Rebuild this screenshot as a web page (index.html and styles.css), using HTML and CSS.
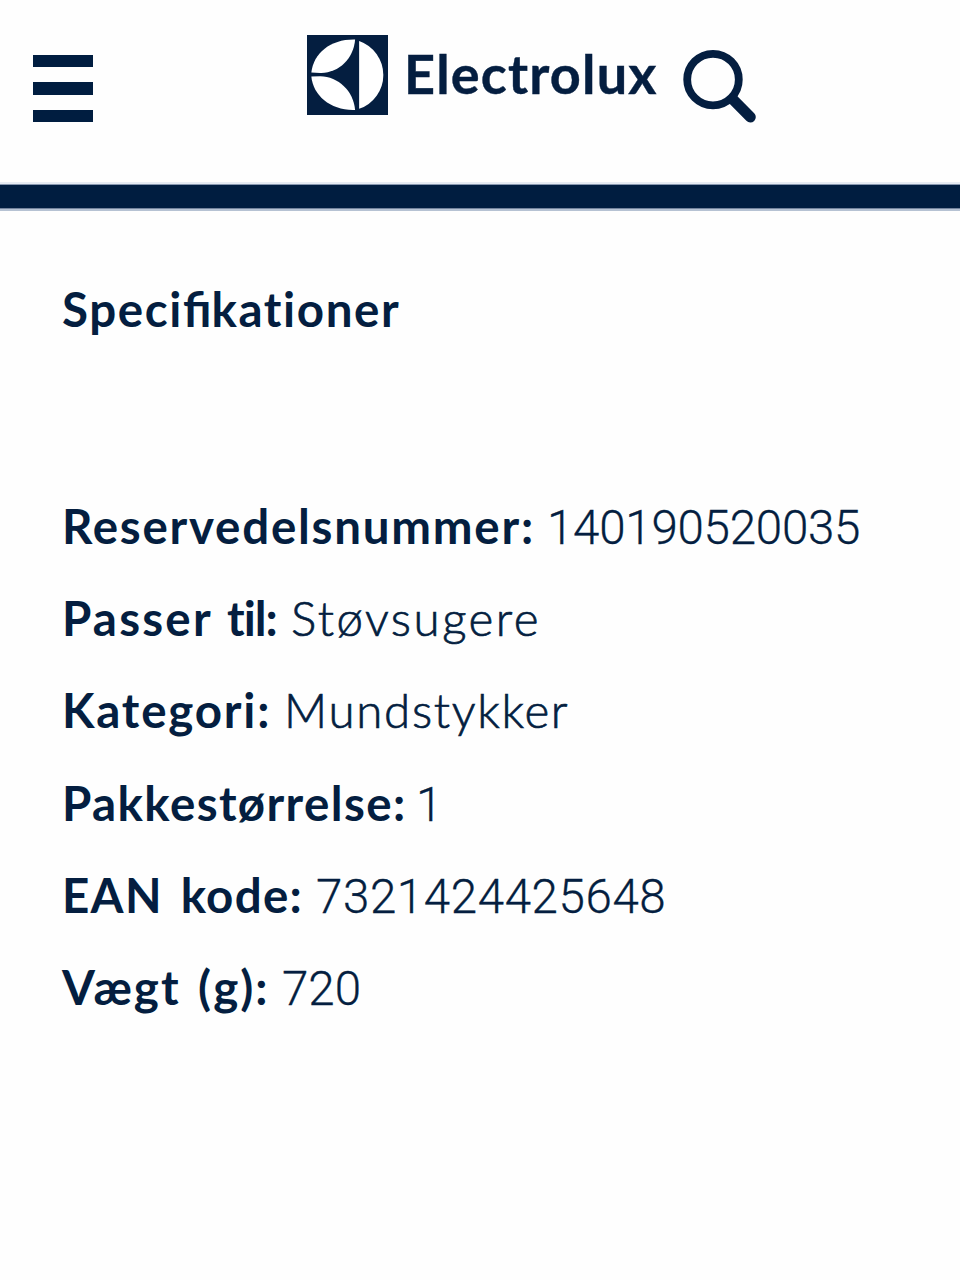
FILE: index.html
```html
<!DOCTYPE html>
<html lang="da">
<head>
<meta charset="utf-8">
<title>Electrolux</title>
<link rel="stylesheet" href="styles.css">
</head>
<body>
<header class="header">
  <button class="menu" aria-label="Menu"><span class="menu-bar"></span><span class="menu-bar"></span><span class="menu-bar"></span></button>
  <a class="logo">
    <svg class="logo-mark" viewBox="0 0 80 80" preserveAspectRatio="none" aria-hidden="true">
      <rect width="80" height="80" fill="#041e40"/>
      <path d="M4.3 37.6C6.5 17.5 24 4 47.5 4.6C46 24 31 38.5 13 37.9Z" fill="#fff"/>
      <path d="M4.3 41.6L13 41.2C31 41.5 46 56 47.5 75C24 76 6 61 4.3 41.6Z" fill="#fff"/>
      <path d="M51.5 6A36 36 0 0 1 51.5 73.8Z" fill="#fff"/>
    </svg>
    <span class="logo-text">Electrolux</span>
  </a>
  <svg class="search" viewBox="0 0 74 74" role="img" aria-label="Søg">
    <circle cx="30" cy="29.6" r="25.8" fill="none" stroke="#041e40" stroke-width="7.8"/>
    <path d="M50 49.5L67.3 67" stroke="#041e40" stroke-width="11" stroke-linecap="round"/>
  </svg>
</header>
<main class="content">
  <h1 class="title">Speci<span class="ligature">fi</span>kationer</h1>
  <div class="specs">
    <p class="row"><strong class="label number">Reservedelsnummer:</strong><span class="value digits number-value">140190520035</span></p>
    <p class="row"><strong class="label fits">Passer <span class="tight">til:</span></strong><span class="value fits-value">Støvsugere</span></p>
    <p class="row"><strong class="label category">Kategori:</strong><span class="value category-value">Mundstykker</span></p>
    <p class="row"><strong class="label pack">Pakkestørrelse:</strong><span class="value digits pack-value">1</span></p>
    <p class="row"><strong class="label ean">EAN kode:</strong><span class="value digits ean-value">7321424425648</span></p>
    <p class="row"><strong class="label weight">Vægt (g):</strong><span class="value digits weight-value">720</span></p>
  </div>
</main>
</body>
</html>
```

FILE: styles.css
```css
* { box-sizing: border-box; }
body { margin: 0; min-height: 1280px; background: #fefefe; color: #041e40; font-family: Lato, "Open Sans", sans-serif; }
.header { display: flex; align-items: flex-start; height: 211px; padding: 35px 0 0 33px; background: linear-gradient(#fefefe 182px, #e7ecf3 182px, #e7ecf3 184px, #8898b0 184px, #8898b0 185px, #001d40 185px, #001d40 208px, #73839d 208px, #73839d 209px, #b6c2d3 209px); }
.menu { display: flex; flex-direction: column; gap: 15px; width: 60px; margin: 20px 214px 0 0; padding: 0; border: 0; background: none; }
.menu-bar { width: 60px; height: 12.3px; background: #001d40; }
.logo { display: flex; width: 350px; }
.logo-mark { width: 81px; height: 80px; flex: none; }
.logo-text { margin-left: 16px; font-size: 54px; line-height: 78px; font-weight: 700; letter-spacing: 1.2px; white-space: nowrap; -webkit-text-stroke: 0.4px #041e40; }
.search { width: 74px; height: 74px; margin: 15px 0 0 26px; overflow: visible; }
.content { padding: 52px 0 0 62px; }
.title { margin: 0 0 125px; font-size: 47.5px; line-height: 92px; font-weight: 700; letter-spacing: 1.6px; }
.ligature { letter-spacing: 0; }
.specs { display: grid; grid-auto-rows: 92.2px; }
.row { display: flex; align-items: baseline; margin: 0; font-size: 47.5px; line-height: 92px; white-space: nowrap; }
.label { font-weight: 700; }
.value { font-weight: 300; -webkit-text-stroke: 0.7px #041e40; }
.digits { font-family: Roboto, Lato, sans-serif; -webkit-text-stroke-width: 0.3px; }
.number { width: 485px; letter-spacing: 1.75px; }
.fits { width: 229px; letter-spacing: 2.2px; word-spacing: 1.5px; }
.tight { letter-spacing: -1px; }
.category { width: 222px; letter-spacing: 1.8px; }
.pack { width: 354px; letter-spacing: 1.4px; }
.ean { width: 254px; letter-spacing: 1.3px; word-spacing: 5px; }
.weight { width: 220px; letter-spacing: 2px; word-spacing: 4px; }
.number-value { letter-spacing: -0.25px; }
.ean-value { letter-spacing: 0.6px; }
.fits-value { letter-spacing: 2.5px; }
.category-value { letter-spacing: 1.7px; }
```
